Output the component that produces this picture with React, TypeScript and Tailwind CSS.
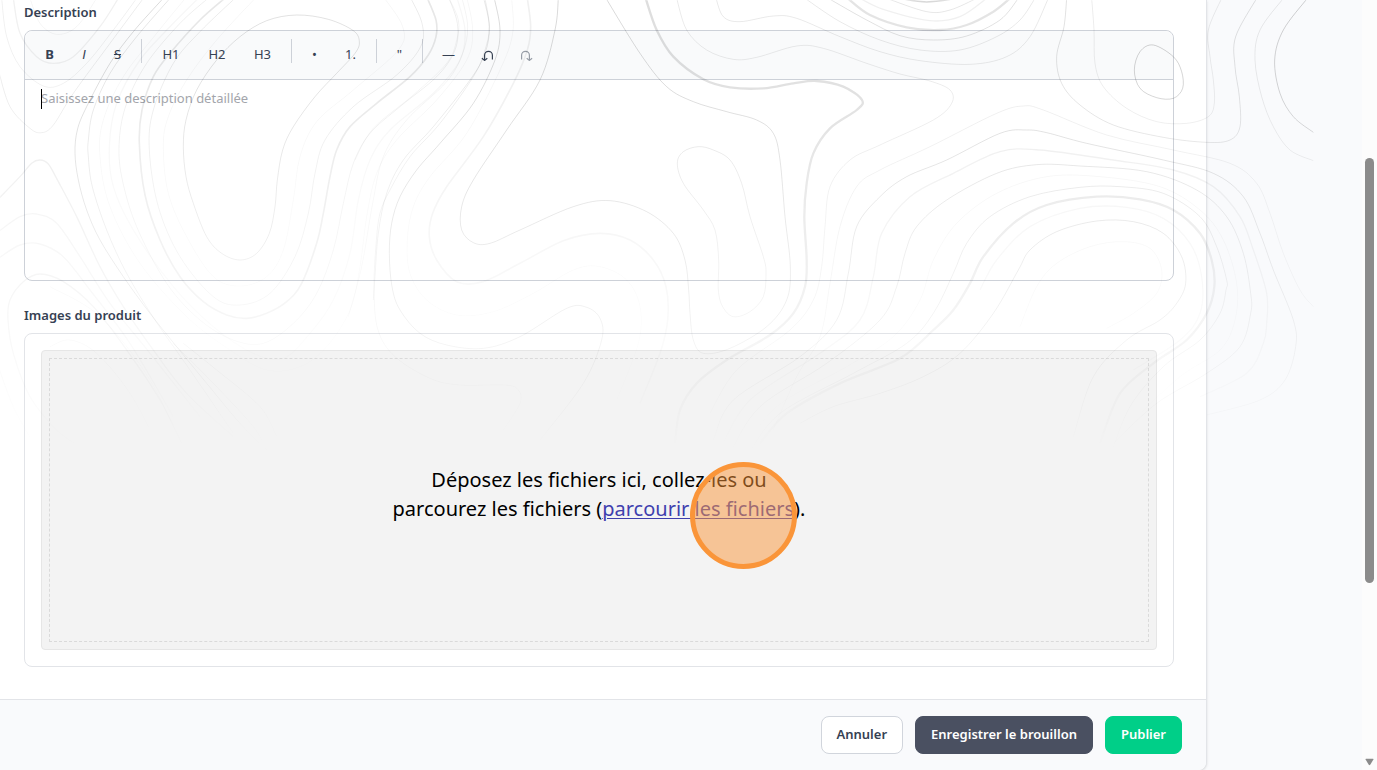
import React, { useState } from "react";

type Contour = { pts: string; o?: number; w?: number; closed?: boolean };

// Contour lines of the topographic backdrop, in thirds of a pixel.
const CONTOURS: Contour[] = [
  // hill on the left
  { pts: "890,45 985,58 1060,92 1078,125 1065,160 1010,220 945,290 880,380 848,450 832,540 825,620 808,700 770,760 720,780 665,760 620,710 580,610 558,530 550,440 558,360 590,270 650,180 720,110 800,62", o: 0.2, closed: true },
  { pts: "1150,-10 1208,80 1195,150 1060,270 950,365 900,470 880,600 850,750 800,830 720,858 640,830 560,710 505,580 490,440 505,350 560,240 650,120 770,-10", o: 0.06 },
  { pts: "1230,-10 1266,70 1262,140 1190,225 1060,320 975,420 945,520 925,640 885,770 810,880 720,915 640,890 540,770 475,620 448,450 460,330 520,190 600,95 710,-10", o: 0.13 },
  { pts: "1280,-10 1308,60 1308,110 1285,165 1230,230 1130,310 1050,380 1010,450 990,530 970,640 950,730 905,850 860,905 800,940 740,955 680,945 610,905 540,830 480,720 435,585 418,430 426,330 460,230 510,160 600,60 680,-10", o: 0.16, w: 5 },
  { pts: "1345,-10 1372,70 1365,150 1310,230 1200,320 1110,400 1060,490 1030,610 1000,750 950,880 880,970 790,1030 700,1020 600,960 500,850 410,680 365,530 358,420 380,310 440,190 540,70 630,-10", o: 0.11 },
  { pts: "1370,-10 1395,90 1380,180 1300,280 1170,390 1110,480 1075,600 1050,760 1000,900 930,1000 850,1075 760,1060 640,980 520,860 400,690 340,560 328,440 350,310 420,180 520,70 600,-10", o: 0.06, w: 4 },
  { pts: "1400,-10 1418,90 1400,180 1310,300 1190,420 1130,520 1100,650 1080,800 1050,930 980,1040 900,1100 800,1110 690,1050 560,950 420,790 330,620 300,470 310,360 370,230 470,100 560,-10", o: 0.06 },
  { pts: "1450,-10 1468,80 1455,160 1410,240 1300,380 1210,480 1160,580 1135,700 1125,830 1120,900", o: 0.15 },
  { pts: "1345,-10 1375,60 1370,120 1340,190 1240,285 1120,385 1065,480", o: 0.08 },
  { pts: "1385,-10 1403,80 1388,160 1340,245 1220,360 1150,470 1118,610 1085,800 1045,950", o: 0.08 },
  { pts: "485,0 400,95 330,190 260,320 232,390 225,460 235,540 260,630 300,720 370,830 450,940 530,1040 620,1150 720,1270 800,1350", o: 0.24 },
  { pts: "510,-5 410,110 330,220 280,330 265,420 265,470 277,560 320,690 380,820 465,960 570,1110 700,1300", o: 0.17 },
  { pts: "150,860 300,950 450,1140 560,1370", o: 0.08 },
  { pts: "550,1030 650,1110 780,1220 830,1310", o: 0.16 },
  { pts: "520,1030 640,1150 760,1280 800,1350", o: 0.16 },

  // dip at the top left and the lines that run under it
  { pts: "40,-5 60,100 110,170 160,190 220,170 300,80 355,-5", o: 0.1, w: 4 },
  { pts: "90,-5 120,70 170,103 230,80 290,-5", o: 0.07 },
  { pts: "5,-5 20,110 60,200 130,258 190,250 260,190 340,90 410,-5", o: 0.1 },
  { pts: "-5,210 30,320 90,385 125,398 160,375 220,280 330,130 430,-5", o: 0.13 },
  { pts: "-5,597 60,530 95,490 120,480 145,492 175,545 230,650 300,800 370,920 460,1050 560,1180 700,1310", o: 0.14, w: 4 },
  { pts: "-5,695 60,650 110,642 170,670 240,770 330,910 450,1060 600,1250", o: 0.1, w: 4 },
  { pts: "-5,775 60,735 120,732 190,770 270,870 390,1030 520,1250", o: 0.1, w: 4 },
  { pts: "560,1360 480,1200 380,1050 280,920 190,845 120,822 70,845 30,900 24,960 40,1060 90,1190 170,1290 240,1340", o: 0.14, w: 4 },
  { pts: "-5,1100 40,1220 100,1330", o: 0.1, w: 4 },
  { pts: "150,1040 210,1020 290,1060 390,1180 470,1330", o: 0.1 },

  // valley in the middle
  { pts: "1455,-5 1468,80 1455,150 1420,230 1320,370 1230,470 1170,570 1140,640 1128,735 1122,870 1134,990 1185,1070 1290,1135 1380,1155 1515,1155 1555,1170 1560,1210 1510,1290", o: 0.13 },
  { pts: "1483,-5 1500,90 1485,180 1420,310 1320,430 1250,510 1200,590 1175,670 1168,760 1176,860 1200,930 1260,1000 1340,1035 1450,1045 1560,1010 1700,925 1760,922 1800,955 1805,1020 1750,1150 1620,1320", o: 0.24 },
  { pts: "1535,-5 1538,100 1500,210 1400,400 1290,530 1240,620 1222,720 1230,820 1280,900 1370,945 1480,935 1600,880 1720,810 1800,800 1880,840 1920,920 1915,1030 1850,1200", o: 0.06 },
  { pts: "1582,-5 1592,80 1582,150 1540,250 1450,410 1340,560 1298,640 1288,710 1310,780 1370,845 1450,845 1560,790 1690,722 1800,700 1890,720 1960,780 1998,860 2003,960 1980,1060 1920,1210", o: 0.1, w: 5 },
  { pts: "1675,-5 1665,90 1620,240 1520,390 1420,540 1385,620 1385,690 1420,728 1470,730 1560,690 1720,620 1830,602 1940,635 2020,700 2055,780 2066,870 2070,940 2080,1020 2110,1060 2190,1045 2300,980 2360,900 2371,800 2355,650 2340,480 2320,400 2270,360 2180,335 2080,305 2000,260 1920,160 1815,-10", o: 0.25 },
  { pts: "2095,440 2050,455 2032,490 2050,550 2110,630 2145,690 2156,780 2155,870 2168,920 2200,950 2250,935 2290,890 2298,820 2290,770 2250,650 2225,550 2190,480 2140,450", o: 0.18, closed: true },
  { pts: "1937,-5 1970,90 2020,170 2110,238 2190,262 2290,265 2380,250 2450,243 2530,260 2586,300 2570,330 2490,385 2440,460 2420,550 2413,650 2420,780 2415,860 2380,940 2310,1005 2180,1080 2090,1150 2040,1230 2025,1330", o: 0.22, w: 7 },
  { pts: "2030,-5 2060,90 2120,150 2200,178 2270,172 2390,138 2470,145 2600,190 2700,222 2790,243 2850,270 2855,310 2800,360 2640,435 2550,480 2490,560 2475,680 2465,800 2440,900 2370,990 2210,1110 2130,1240", o: 0.14 },
  { pts: "2148,-5 2170,50 2220,65 2320,48 2390,55 2520,110 2640,155 2760,182 2910,193 3020,170 3090,110 3145,-5", o: 0.15 },
  { pts: "2415,-5 2520,65 2640,120 2760,150 2880,150 2990,110 3060,60 3105,-5", o: 0.15 },
  { pts: "2485,-5 2600,60 2700,107 2800,120 2900,108 3000,60 3055,-5", o: 0.2 },
  { pts: "2543,-5 2610,45 2720,82 2820,90 2900,75 2980,35 3030,-5", o: 0.18, w: 7 },
  { pts: "2580,-5 2650,28 2790,62 2880,50 2960,-5", o: 0.1, w: 4 },
  { pts: "2660,-5 2780,35 2850,30 2930,-5", o: 0.16 },
  { pts: "2700,-5 2780,6 2870,-5", o: 0.25, w: 5 },

  // ridge on the top right
  { pts: "3200,-5 3192,80 3170,170 3185,250 3240,315 3340,375 3490,412 3620,427 3690,420 3720,380 3718,290 3705,200 3707,110 3770,-5", o: 0.2 },
  { pts: "3275,-5 3282,90 3285,190 3310,260 3380,325 3470,365 3560,370 3625,350 3643,310 3640,240 3630,170 3625,90 3665,-5", o: 0.13 },
  { pts: "3460,135 3420,155 3403,210 3420,265 3470,293 3520,295 3548,265 3545,215 3520,170", o: 0.3, closed: true },
  { pts: "3850,-5 3780,90 3765,180 3785,290 3820,380 3870,450 3940,482", o: 0.14 },
  { pts: "3922,-5 3850,90 3824,180 3840,280 3880,350 3940,397", o: 0.3 },

  // hill on the right
  { pts: "2320,1290 2390,1130 2460,1010 2490,850 2520,680 2570,560 2640,510 2790,440 2990,340 3070,318 3130,330 3320,405 3520,450 3690,490 3770,550 3810,640 3850,760 3900,870 3940,920", o: 0.12 },
  { pts: "2140,1320 2200,1200 2400,1070 2510,960 2545,820 2570,680 2640,590 2720,530 2840,480 3000,400 3080,390 3140,398 3260,430 3490,480 3640,520 3730,590 3780,700 3820,810 3880,960 3887,1040 3855,1140 3780,1200 3620,1245", o: 0.24 },
  { pts: "2160,1350 2250,1200 2460,1060 2580,960 2620,830 2645,700 2730,590 2860,520 3000,455 3120,450 3340,480 3520,510 3640,560 3720,650 3760,750 3800,880 3800,970 3790,1030 3740,1120 3600,1190", o: 0.13, w: 4 },
  { pts: "2190,1360 2280,1220 2480,1090 2640,960 2690,860 2715,760 2750,680 2840,600 2990,520 3110,494 3240,498 3440,515 3590,570 3680,650 3730,760 3752,880 3752,940 3720,1040 3620,1120 3470,1210 3340,1330", o: 0.22 },
  { pts: "2220,1370 2330,1220 2540,1100 2680,1010 2760,900 2800,780 2870,670 2990,580 3140,530 3300,530 3480,560 3600,630 3670,720 3710,850 3705,960 3660,1050 3540,1130 3400,1260", o: 0.08 },
  { pts: "2240,1370 2340,1240 2560,1120 2720,1030 2800,940 2860,820 2900,730 2970,650 3090,590 3240,562 3360,560 3490,580 3600,650 3650,740 3680,840 3678,870 3660,940 3600,1020 3490,1100 3390,1220 3330,1370", o: 0.2 },
  { pts: "2280,1330 2360,1240 2520,1150 2700,1075 2800,990 2860,930 2910,850 2950,770 3040,670 3140,615 3290,590 3420,598 3520,630 3600,700 3635,780 3643,860 3620,940 3560,1020 3460,1090 3360,1180 3300,1330", o: 0.2, w: 7 },
  { pts: "2940,870 2990,780 3090,680 3240,625 3380,622 3490,655 3570,730 3605,830 3600,940 3540,1020 3400,1110", o: 0.09, w: 4 },
  { pts: "2400,1270 2500,1220 2640,1180 2770,1130 2880,1060 2980,940 3055,810 3090,750 3170,695 3290,663 3400,665 3490,700 3545,770 3557,850 3530,910 3480,960 3380,1020 3280,1130 3220,1310", o: 0.24 },
  { pts: "3060,980 3110,860 3170,790 3270,740 3370,725 3450,745 3485,810 3470,880 3400,940 3320,985", o: 0.08 },
];

// Catmull-Rom through the points, written out as cubic Béziers.
function toPath({ pts, closed }: Contour) {
  const p = pts.split(" ").map((s) => s.split(",").map(Number));
  const n = p.length;
  const at = (i: number) => (closed ? p[(i + n) % n] : p[Math.max(0, Math.min(n - 1, i))]);
  let d = `M${p[0][0]} ${p[0][1]}`;
  const last = closed ? n : n - 1;
  for (let i = 0; i < last; i++) {
    const [a, b, c, e] = [at(i - 1), at(i), at(i + 1), at(i + 2)];
    d += `C${b[0] + (c[0] - a[0]) / 6} ${b[1] + (c[1] - a[1]) / 6} ${c[0] - (e[0] - b[0]) / 6} ${c[1] - (e[1] - b[1]) / 6} ${c[0]} ${c[1]}`;
  }
  return d;
}

function TopoLines() {
  return (
    <svg
      className="pointer-events-none absolute left-0 top-0 z-10 opacity-60"
      width="1377"
      height="460"
      viewBox="0 0 4131 1380"
      fill="none"
      stroke="#000"
      aria-hidden="true"
    >
      <defs>
        <linearGradient id="fade" x1="0" y1="0" x2="0" y2="1">
          <stop offset="0" stopColor="#fff" />
          <stop offset="0.2" stopColor="#fff" stopOpacity="0.9" />
          <stop offset="0.45" stopColor="#fff" stopOpacity="0.6" />
          <stop offset="0.7" stopColor="#fff" stopOpacity="0.35" />
          <stop offset="1" stopColor="#fff" stopOpacity="0" />
        </linearGradient>
        <mask id="fade-mask" maskUnits="userSpaceOnUse" x="0" y="0" width="4131" height="1380">
          <rect width="4131" height="1380" fill="url(#fade)" />
        </mask>
      </defs>
      <g mask="url(#fade-mask)">
        {CONTOURS.map((c, i) => (
          <path key={i} d={toPath(c)} strokeOpacity={c.o} strokeWidth={c.w ?? 3} />
        ))}
      </g>
    </svg>
  );
}

const HookArrow = ({ flip }: { flip?: boolean }) => (
  <svg
    className={flip ? "-scale-x-100" : ""}
    width="13"
    height="12"
    viewBox="0 0 13 12"
    fill="none"
    stroke="currentColor"
    strokeWidth="1.2"
    aria-hidden="true"
  >
    <path d="M11.400 10.500V6.200a3.900 3.900 0 0 0-7.800 0v5" />
    <path d="M.9 9.200l2.700 2.200 2.700-2.200" />
  </svg>
);

const Divider = () => <span className="mx-1 h-6 w-px bg-[#cdd1d8]" />;

function Toolbar() {
  const base = "flex h-8 items-center justify-center rounded text-[13px] text-[#364153]";
  return (
    <div role="toolbar" className="flex flex-wrap gap-1 rounded-t-lg border-b border-[#cdd1d8] bg-[#f9fafb] p-2">
      <button type="button" className={`${base} w-[33px] font-bold`}>B</button>
      <button type="button" className={`${base} w-7 font-['Liberation_Sans',sans-serif] italic`}>I</button>
      <button type="button" className={`${base} w-[31px] line-through`}>S</button>
      <Divider />
      <button type="button" className={`${base} w-[42px]`}>H1</button>
      <button type="button" className={`${base} w-[42px]`}>H2</button>
      <button type="button" className={`${base} w-[41px]`}>H3</button>
      <Divider />
      <button type="button" className={`${base} w-[29px]`}>•</button>
      <button type="button" className={`${base} w-[35px]`}>1.</button>
      <Divider />
      <button type="button" className={`${base} w-[29px]`}>"</button>
      <Divider />
      <button type="button" className={`${base} w-[35px]`}>—</button>
      <button type="button" className={`${base} w-[35px]`} aria-label="Annuler la saisie">
        <HookArrow />
      </button>
      <button type="button" className={`${base} w-[35px] opacity-50`} aria-label="Rétablir" disabled>
        <HookArrow flip />
      </button>
    </div>
  );
}

function DropZone() {
  return (
    <div className="rounded-lg border border-[#e2e4e8] p-4">
      <div className="relative rounded border border-[#e6e6e6] bg-[#f3f3f3] p-[7px]">
        <div className="flex h-[284px] items-center justify-center border border-dashed border-[#dadada] pb-3">
          <p className="text-center text-[20px] leading-[29px] text-black">
            Déposez les fichiers ici, collez-les ou
            <br />
            parcourez les fichiers (
            <a href="#parcourir" className="text-[#3f3fae] underline decoration-1 underline-offset-2">
              parcourir les fichiers
            </a>
            ).
          </p>
        </div>
        {/* click marker */}
        <span className="absolute left-[calc(50%+91px)] top-[111px] size-[107px] rounded-full border-[5px] border-[#fa9539] bg-[#fa9539]/50" />
      </div>
    </div>
  );
}

export default function App() {
  const [text, setText] = useState("");
  const btn = "h-[38px] rounded-lg border px-[15px] text-[13px] font-semibold";

  return (
    <div className="relative flex min-h-screen overflow-hidden bg-[#f9fafc] font-['Noto_Sans','Liberation_Sans',sans-serif]">
      <main className="mr-[155px] flex-1 rounded-br-lg border-r border-[#e2e4e8] bg-white shadow-sm">
        <form onSubmit={(e) => e.preventDefault()}>
          <div className="px-6 pb-8 pr-8 pt-[2px]">
            <label htmlFor="description" className="mb-2 block text-[13px] font-semibold leading-5 text-[#364153]">
              Description
            </label>
            <div className="relative mb-6 rounded-lg border border-[#cdd1d8]">
              <Toolbar />
              <textarea
                id="description"
                value={text}
                onChange={(e) => setText(e.target.value)}
                placeholder="Saisissez une description détaillée"
                className="block h-[200px] w-full resize-none bg-transparent px-4 py-2 text-[13px] leading-5 outline-none placeholder:text-[#a3a5ab]"
              />
              <span className="absolute left-4 top-[58px] h-5 w-px bg-black" />
            </div>
            <h2 className="mb-2 text-[13px] font-semibold leading-5 text-[#364153]">Images du produit</h2>
            <DropZone />
          </div>
          <div className="flex justify-end gap-3 rounded-br-lg border-t border-[#e2e4e8] bg-[#f9fafc] px-6 py-4">
            <button type="button" className={`${btn} border-[#d1d5dc] bg-white text-[#364153]`}>Annuler</button>
            <button type="button" className={`${btn} border-[#4a5061] bg-[#4a5061] text-white`}>Enregistrer le brouillon</button>
            <button type="submit" className={`${btn} border-[#00cf88] bg-[#00cf88] text-white`}>Publier</button>
          </div>
        </form>
      </main>

      {/* scroll track */}
      <div className="flex w-[15px] flex-col items-center justify-between bg-[#fcfcfc]">
        <div className="mt-[158px] h-[425px] w-[9px] rounded-full bg-[#8b8b8b]" />
        <svg className="mb-1" width="9" height="8" viewBox="0 0 10 8" fill="#8b8b8b" aria-hidden="true">
          <path d="M1 .5h8q.8 0 .4.8L5.800 7q-.8 1-1.600 0L.6 1.300Q.2.5 1 .5z" />
        </svg>
      </div>

      <TopoLines />
    </div>
  );
}
